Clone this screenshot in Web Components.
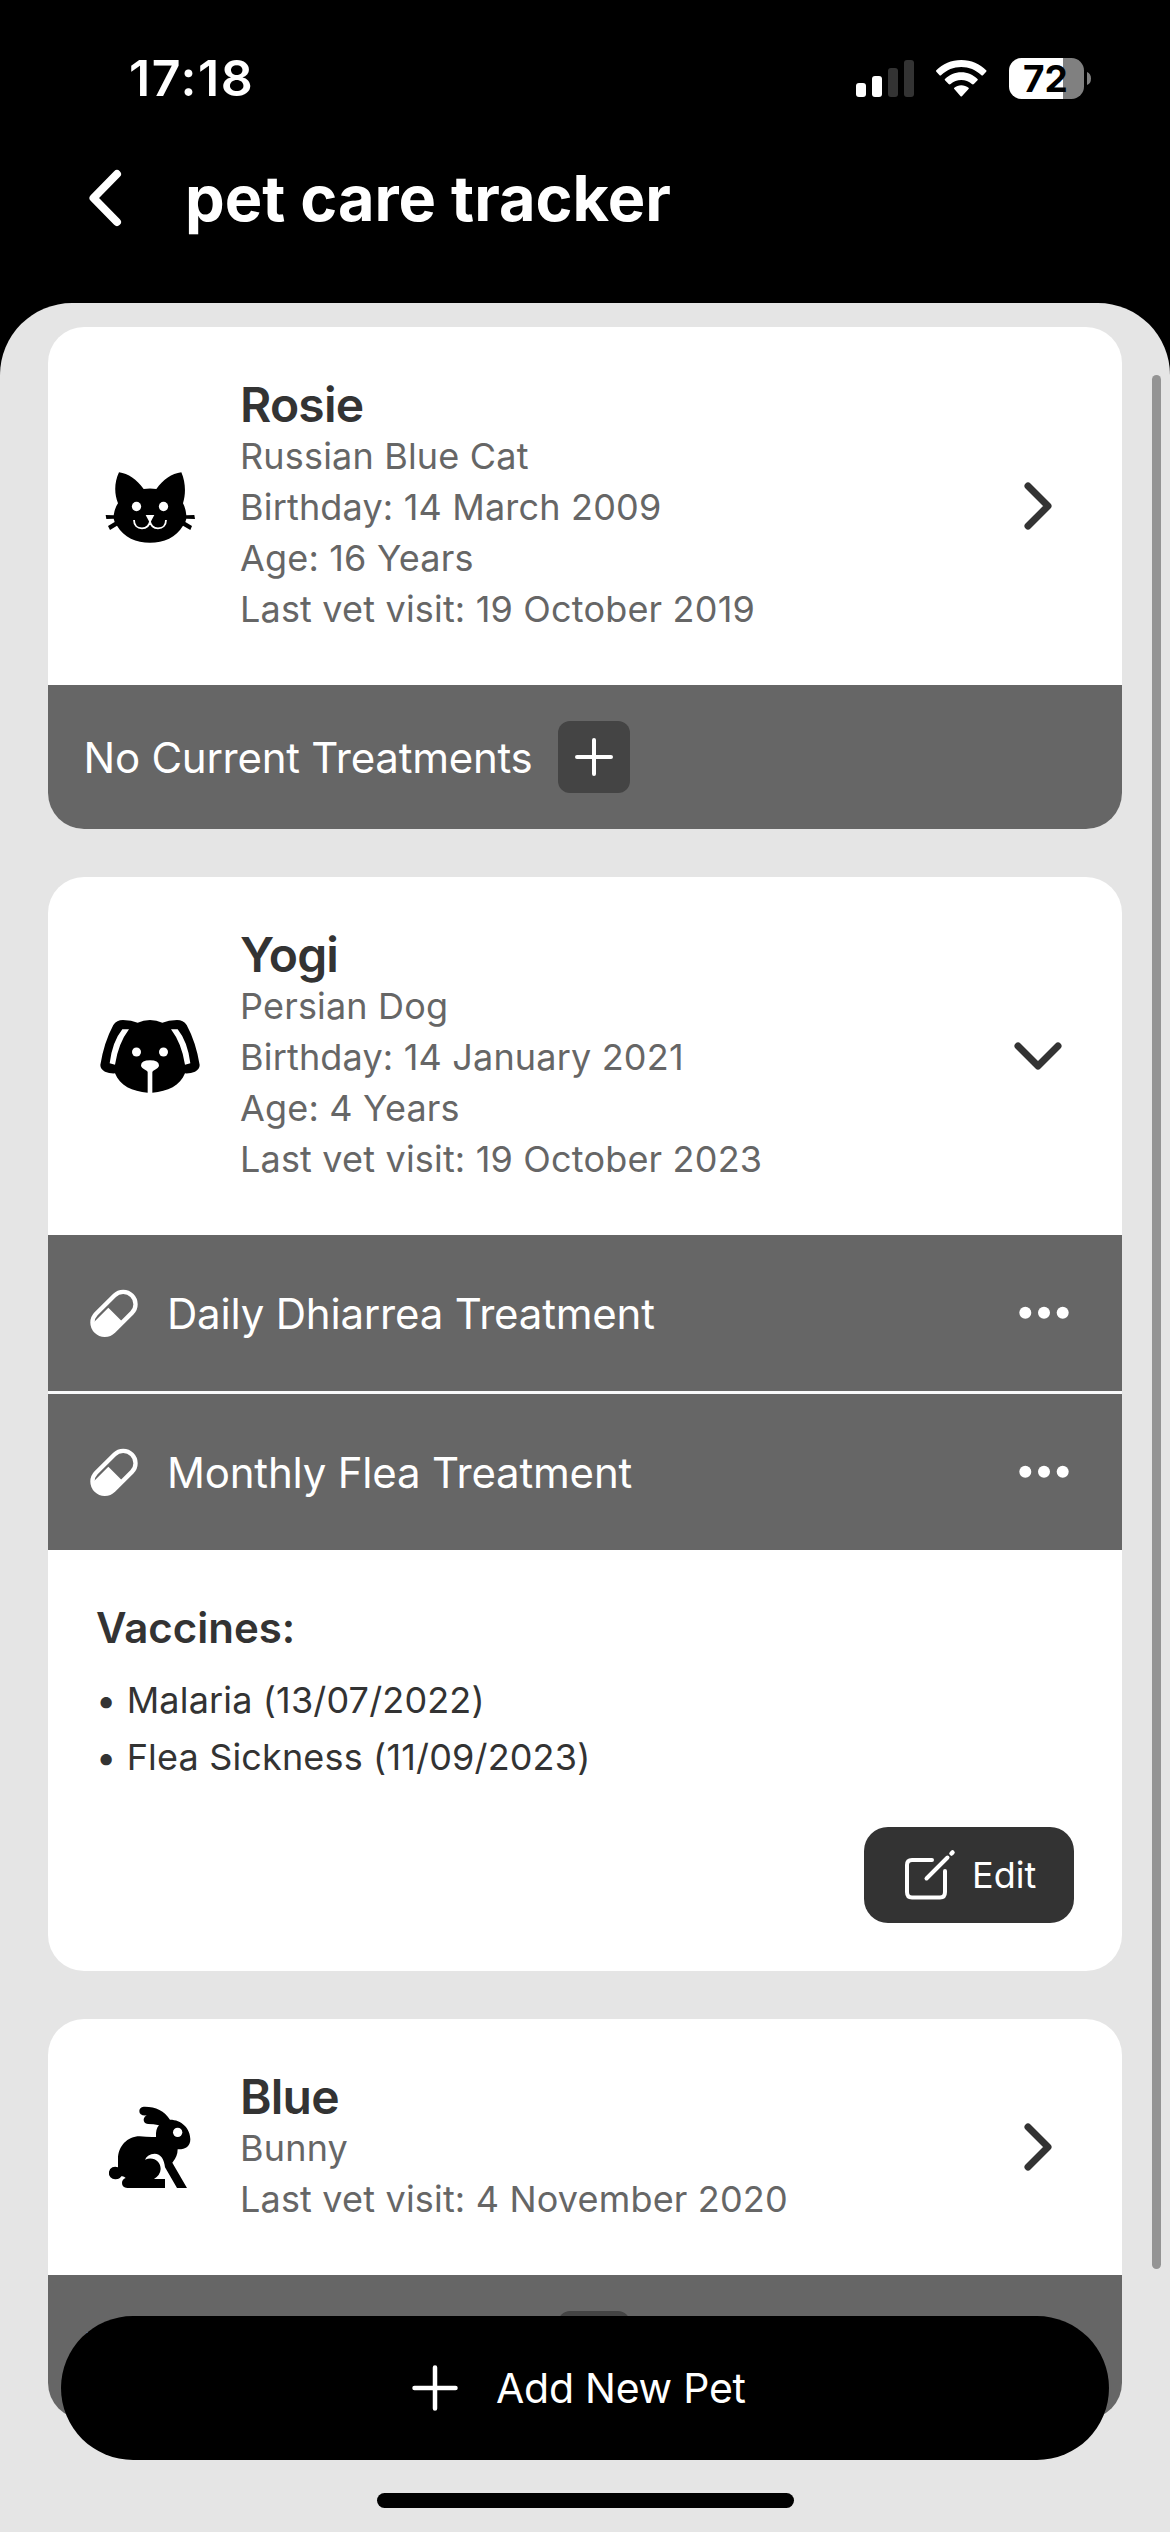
<!DOCTYPE html>
<html lang="en">
<head>
<meta charset="utf-8">
<title>pet care tracker</title>
<style>
html,body{margin:0;height:2532px;background:#000;overflow:hidden}
body{font-family:Inter,"Noto Sans",sans-serif;color:#333;width:1170px}
</style>
</head>
<body>
<pet-app></pet-app>
<script>
const define = (name, html) => {
  const tpl = document.createElement('template');
  tpl.innerHTML = html;
  customElements.define(name, class extends HTMLElement {
    constructor() {
      super();
      this.attachShadow({ mode: 'open' }).append(tpl.content.cloneNode(true));
    }
  });
};

define('status-bar', `
<style>
:host{display:flex;height:144px;box-sizing:border-box;padding:47px 79px 0 129px;justify-content:space-between;align-items:flex-start;color:#fff}
.time{font-size:50px;font-weight:600;line-height:62px;letter-spacing:1.6px}
.right{display:flex;align-items:center;height:62px}
.cell{margin-right:22px}.wifi{margin-right:22.5px}
.batt{display:flex;align-items:center;gap:3px}
.body{width:75px;height:41px;border-radius:12.5px;background:linear-gradient(90deg,#fff 54px,#808080 54px);color:#000;font-size:37px;font-weight:700;line-height:41px;text-align:center;box-sizing:border-box;padding-right:2px}
svg{display:block}
</style>
<div class="time">17:18</div>
<div class="right">
<svg class="cell" width="58" height="37" viewBox="0 0 58 37"><g fill="#fff"><rect y="23" width="10" height="14" rx="3"/><rect x="16" y="16" width="10" height="21" rx="3"/></g><g fill="#333"><rect x="32" y="8" width="10" height="29" rx="3"/><rect x="48" width="10" height="37" rx="3"/></g></svg>
<svg class="wifi" width="50.5" height="37" viewBox="348 57 152 111"><g fill="#fff"><path d="M424 57C394 57 368 69 349 88Q347 90 349 92L358 102Q361 105 364 102C380 87 401 78 424 78S468 87 484 102Q487 105 490 102L499 92Q501 90 499 88C480 69 454 57 424 57Z"/><path d="M424 94C405 94 388 102 375 114Q373 116 375 118L386 129Q389 132 392 129C401 121 412 117 424 117S447 121 456 129Q459 132 462 129L473 118Q475 116 473 114C460 102 443 94 424 94Z"/><path d="M424 133C416 133 409 136 403 140Q401 142 403 144L422 166Q424 168 426 166L446 144Q448 142 446 140C440 136 432 133 424 133Z"/></g></svg>
<div class="batt"><div class="body">72</div><svg width="4" height="13" viewBox="0 0 4 13"><path d="M0 0Q4 1.5 4 6.5T0 13Z" fill="#808080"/></svg></div>
</div>`);

define('nav-header', `
<style>
:host{display:flex;height:159px;box-sizing:border-box;padding:0 85px 51px;align-items:center;color:#fff}
svg{display:block;margin-right:60px}
h1{margin:0;font-size:63px;font-weight:700;line-height:76px}
</style>
<svg width="40" height="60" viewBox="0 0 40 60" fill="none" stroke="#fff" stroke-width="8" stroke-linecap="round" stroke-linejoin="round"><path d="M32 6L8.500 30L32 54"/></svg>
<h1><slot></slot></h1>`);

define('icon-cat', `
<style>:host{display:block;width:108px;height:108px}svg{display:block}</style>
<svg width="108" height="108" viewBox="48 36 324 324"><path d="M117 97C145 101 170 118 191 147Q210 144 229 147C250 118 275 101 304 97C317 127 318 160 309 190Q317 204 319 226L343 225L345 237L319 236L316 246L336 258L331 270L309 257C289 292 251 308 210 308S131 292 111 257L90 270L84 258L104 246L101 236L79 237L77 225L101 226Q104 204 114 190C102 160 103 127 117 97Z"/><g fill="#fff"><circle cx="169.500" cy="199.500" r="14"/><circle cx="250.500" cy="199.500" r="14"/><path d="M197 225H223L213.500 243H206.500Z"/></g><path d="M162 240C162 256 172 265 186 265C199 265 210 256 210 242C210 256 221 265 234 265C248 265 258 256 258 240" fill="none" stroke="#fff" stroke-width="5.500"/></svg>`);

define('icon-dog', `
<style>:host{display:block;width:108px;height:108px}svg{display:block}</style>
<svg width="108" height="108" viewBox="48 36 324 324"><path d="M129 90Q155 91 173 98Q190 90 210 90T247 98Q265 91 291 90Q310 90 320 105Q348 157 359 225Q359 237 345 245Q331 251 315 250C301 287 263 305 217 308V247Q217 244 220 242Q237 235 237 226Q236 211 210 211T183 226Q183 235 200 242Q203 244 203 247V308C157 305 119 287 105 250Q89 251 75 245Q61 237 61 225Q72 157 100 105Q110 90 129 90Z"/><g fill="#fff"><circle cx="169.500" cy="186" r="13.500"/><circle cx="250.500" cy="186" r="13.500"/><path d="M127 118H147Q115 160 105 224L89 220Q97 155 127 118ZM293 118H273Q305 160 315 224L331 220Q323 155 293 118Z"/></g></svg>`);

define('icon-bunny', `
<style>:host{display:block;width:108px;height:108px}svg{display:block}</style>
<svg width="108" height="108" viewBox="48 39 324 324"><path d="M191 80C225 79 253 91 270 119C304 119 331 145 331 178C331 200 315 209 293 208Q293 230 277 248L321 324H291L255 262C253 238 242 221 224 221Q202 222 195 239C220 228 242 244 242 267Q241 285 222 297H255V324H142Q126 323 126 309Q126 298 137 294Q131 287 124 289Q119 298 107 298A19 19 0 1 1 114 262V237C114 199 142 169 179 169Q205 172 228 171C227 155 230 143 237 136Q221 132 204 132Q190 131 191 117Q193 109 200 106Q178 108 178 93Q178 82 191 80Z"/><circle cx="293" cy="157" r="14" fill="#fff"/></svg>`);

define('icon-chevron', `
<style>:host{display:block;width:72px;height:72px}:host([down]) svg{transform:rotate(90deg)}svg{display:block}</style>
<svg width="72" height="72" fill="none" stroke="#333" stroke-width="7" stroke-linecap="round" stroke-linejoin="round"><path d="M26 16L46 36L26 56"/></svg>`);

define('pet-card', `
<style>
:host{display:block;flex:none;background:#fff;border-radius:36px;overflow:hidden}
.head{display:flex;align-items:center;padding:48px}
.info{flex:1;margin-left:36px;padding:1px 0 2px}
.name{height:55px;font-size:48px;line-height:58px;font-weight:600;color:#333;letter-spacing:-.8px}
.lines{font-size:36px;line-height:51px;color:#666;letter-spacing:.18px}
</style>
<div class="head"><slot name="icon"></slot><div class="info"><div class="name"><slot name="name"></slot></div><div class="lines"><slot name="line"></slot></div></div><slot name="toggle"></slot></div>
<slot></slot>`);

define('no-treatments', `
<style>
:host{display:flex;align-items:center;height:144px;padding-left:35.5px;background:#666;color:#fff;font-size:42px;line-height:51px}
.t{width:474.5px;padding-top:1px;box-sizing:border-box;white-space:nowrap;letter-spacing:-.25px}
.b{width:72px;height:72px;border-radius:12px;background:#444}
svg{display:block}
</style>
<div class="t">No Current Treatments</div>
<div class="b"><svg width="72" height="72" stroke="#fff" stroke-width="4" stroke-linecap="round"><path d="M19 36H53M36 19V53"/></svg></div>`);

define('treatment-row', `
<style>
:host{display:flex;align-items:center;height:156px;padding:0 48px 0 36px;background:#666;color:#fff;font-size:42px;line-height:51px;letter-spacing:-.2px}
:host([divided]){border-bottom:3px solid #f8f9fa}
.t{flex:1;margin-left:23px;padding-top:1px}
svg{display:block}
</style>
<svg width="60" height="60" viewBox="12 39 180 180"><g transform="rotate(-45 102 130)"><rect x="26" y="93" width="152" height="74" rx="37" fill="none" stroke="#fff" stroke-width="13"/><path d="M102 106V170H60Q24 166 24 130Q24 116 34 106Z" fill="#fff"/></g></svg>
<div class="t"><slot></slot></div>
<svg width="60" height="60" fill="#fff"><circle cx="11.300" cy="29.800" r="6"/><circle cx="30" cy="29.800" r="6"/><circle cx="48.700" cy="29.800" r="6"/></svg>`);

define('edit-button', `
<style>
:host{display:flex;align-items:center;width:210px;height:96px;box-sizing:border-box;padding-left:36px;border-radius:24px;background:#333;color:#fff;font-size:36px;line-height:44px}
svg{display:block;margin-right:12px}
</style>
<svg width="60" height="60" viewBox="900 1845 60 60" fill="none" stroke="#fff" stroke-width="4" stroke-linecap="round" stroke-linejoin="round"><path d="M932 1860H912Q907 1860 907 1865V1892Q907 1897.500 912 1897.500H940Q945 1897.500 945 1892V1871M926.500 1878.500L947.500 1857.500"/><path d="M951.500 1853.500L952.500 1852.500" stroke-width="4.500"/></svg>
<slot></slot>`);

define('vaccine-panel', `
<style>
:host{display:flex;flex-direction:column;padding:49px 48px 48px;color:#333}
.h{font-size:42px;font-weight:600;line-height:58px;margin-bottom:15px}
.list{font-size:36px;line-height:57px;margin-bottom:41px;letter-spacing:.16px}
edit-button{align-self:flex-end}
</style>
<div class="h">Vaccines:</div><div class="list"><slot></slot></div><edit-button>Edit</edit-button>`);

define('add-button', `
<style>
:host{display:flex;align-items:center;height:144px;box-sizing:border-box;padding-left:344px;border-radius:72px;background:#000;color:#fff;font-size:41px;line-height:51px;letter-spacing:-.25px}
svg{display:block;margin-right:31px}
</style>
<svg width="60" height="60" stroke="#fff" stroke-width="4.500" stroke-linecap="round"><path d="M9.500 30H50.500M30 9.500V50.500"/></svg>
<slot></slot>`);

define('pet-app', `
<style>
:host{display:block;position:relative;width:1170px;height:2532px;overflow:hidden;background:#000}
main{display:flex;flex-direction:column;gap:48px;height:2229px;box-sizing:border-box;padding:24px 48px 0;background:#e5e5e5;border-radius:72px 72px 0 0;overflow:hidden}
.bar{position:absolute;right:9px;top:375px;width:9px;height:1894px;border-radius:5px;background:#949494}
add-button{position:absolute;left:61px;right:61px;bottom:72px}
.home{position:absolute;left:377px;width:417px;bottom:24px;height:15px;border-radius:8px;background:#000}
</style>
<status-bar></status-bar>
<nav-header>pet care tracker</nav-header>
<main>
<pet-card><icon-cat slot="icon"></icon-cat><span slot="name">Rosie</span>
<div slot="line">Russian Blue Cat</div><div slot="line">Birthday: 14 March 2009</div><div slot="line">Age: 16 Years</div><div slot="line">Last vet visit: 19 October 2019</div>
<icon-chevron slot="toggle"></icon-chevron><no-treatments></no-treatments></pet-card>
<pet-card><icon-dog slot="icon"></icon-dog><span slot="name">Yogi</span>
<div slot="line">Persian Dog</div><div slot="line">Birthday: 14 January 2021</div><div slot="line">Age: 4 Years</div><div slot="line">Last vet visit: 19 October 2023</div>
<icon-chevron slot="toggle" down></icon-chevron>
<treatment-row divided>Daily Dhiarrea Treatment</treatment-row><treatment-row>Monthly Flea Treatment</treatment-row>
<vaccine-panel><div>• Malaria (13/07/2022)</div><div>• Flea Sickness (11/09/2023)</div></vaccine-panel></pet-card>
<pet-card><icon-bunny slot="icon"></icon-bunny><span slot="name">Blue</span>
<div slot="line">Bunny</div><div slot="line">Last vet visit: 4 November 2020</div>
<icon-chevron slot="toggle"></icon-chevron><no-treatments></no-treatments></pet-card>
</main>
<div class="bar"></div>
<add-button>Add New Pet</add-button>
<div class="home"></div>`);
</script>
</body>
</html>
